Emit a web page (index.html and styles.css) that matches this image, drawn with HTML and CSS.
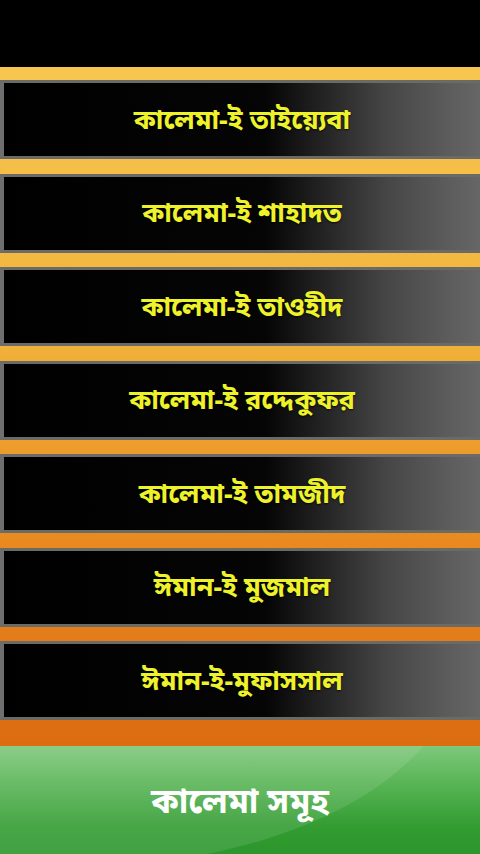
FILE: index.html
```html
<!DOCTYPE html>
<html lang="bn">
<head>
  <meta charset="UTF-8" />
  <meta name="viewport" content="width=device-width, initial-scale=1.0"/>
  <title>কালেমা সমূহ</title>
  <link rel="stylesheet" href="styles.css">
</head>
<body>
  <div class="app">
    <div class="topbar"></div>
    <div class="menu">
      <button class="item">কালেমা-ই তাইয়্যেবা</button>
      <button class="item">কালেমা-ই শাহাদত</button>
      <button class="item">কালেমা-ই তাওহীদ</button>
      <button class="item">কালেমা-ই রদ্দেকুফর</button>
      <button class="item">কালেমা-ই তামজীদ</button>
      <button class="item">ঈমান-ই মুজমাল</button>
      <button class="item">ঈমান-ই-মুফাসসাল</button>
    </div>
    <div class="footer">
      <span>কালেমা সমূহ</span>
    </div>
  </div>
</body>
</html>
```

FILE: styles.css
```css
* {
  box-sizing: border-box;
  font-family: 'Noto Sans Bengali', 'Noto Sans', sans-serif;
}

body {
  margin: 0;
  padding: 0;
  background: #000;
}

.app {
  width: 480px;
  height: 854px;
  display: flex;
  flex-direction: column;
  overflow: hidden;
}

.topbar {
  height: 67px;
  background: #000;
}

.menu {
  display: flex;
  flex-direction: column;
  gap: 14.5px;
  padding: 13px 0 26px;
  background: linear-gradient(to bottom, #f6c650, #f1b23a 40%, #e88a20 70%, #dc6c10);
}

.item {
  height: 79px;
  border: none;
  border-top: 3px solid #6a6a66;
  border-bottom: 3px solid #6a6a66;
  border-left: 4px solid #6e6e6e;
  background: linear-gradient(to right, #000 0%, #050505 55%, #262626 68%, #454545 80%, #5a5a5a 92%, #666 100%);
  color: #eef22a;
  font-size: 27px;
  font-weight: 700;
  text-shadow: 0 1px 2px rgba(0, 0, 0, 0.8);
  cursor: pointer;
  padding: 4px 0 0;
}

.footer {
  flex: 1;
  position: relative;
  display: flex;
  align-items: center;
  justify-content: center;
  background: linear-gradient(to bottom, #7ec87b, #4eae4b 45%, #329c31 75%, #2c962c);
  overflow: hidden;
}

.footer:before {
  content: "";
  position: absolute;
  left: -300px;
  top: -300px;
  width: 760px;
  height: 420px;
  border-radius: 50%;
  background: rgba(255, 255, 255, 0.1);
}

.footer span {
  position: relative;
  color: #fff;
  font-size: 34px;
  font-weight: 700;
  padding-top: 8px;
}
```
